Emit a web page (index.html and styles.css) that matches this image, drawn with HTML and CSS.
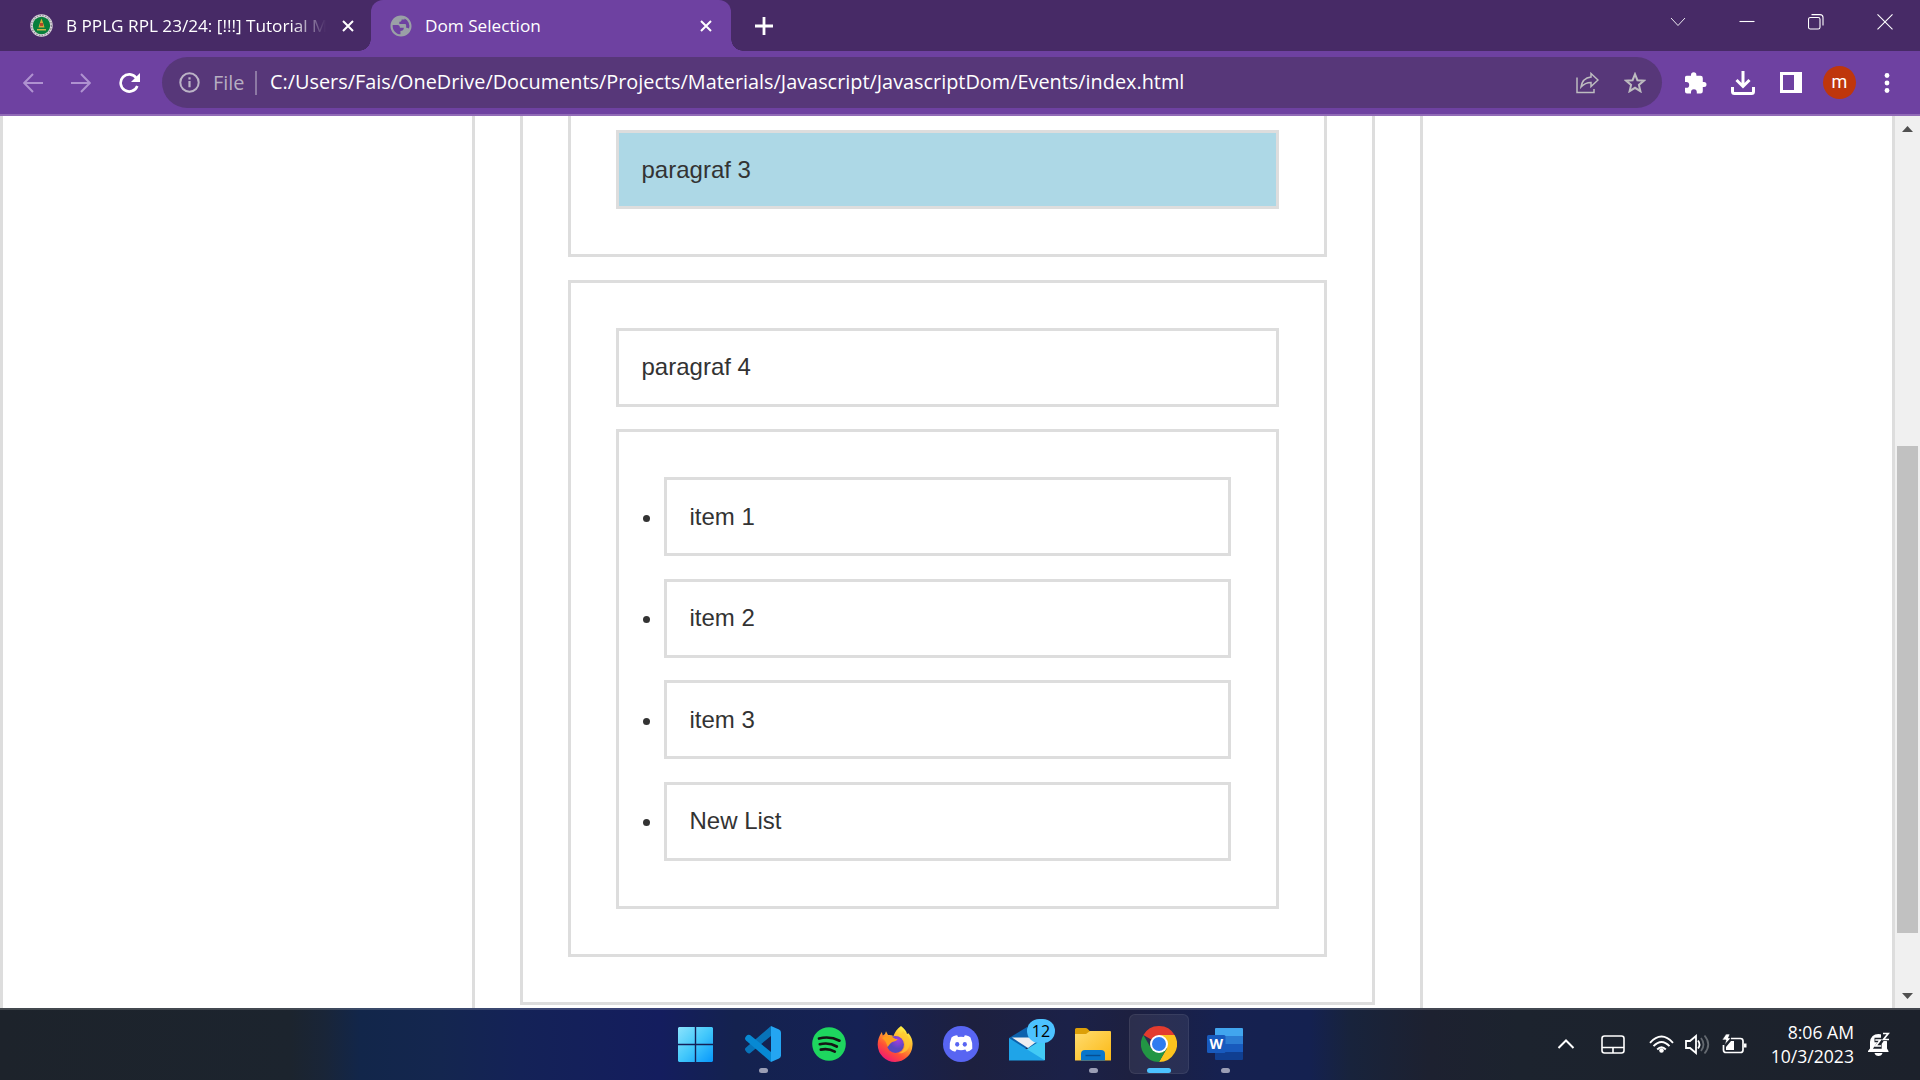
FILE: index.html
```html
<!DOCTYPE html>
<html lang="en">
<head>
<meta charset="utf-8">
<title>Dom Selection</title>
<link rel="stylesheet" href="styles.css">
</head>
<body>
<div class="screen">
  <header class="tabs">
    <div class="tab tab-idle">
      <svg class="favicon" width="23" height="23" viewBox="0 0 23 23"><circle cx="11.500" cy="11.500" r="11.200" fill="#d9d6dc"/><circle cx="11.500" cy="11.500" r="10" fill="none" stroke="#8d8790" stroke-dasharray="1.500 1.300" stroke-width="1.200"/><circle cx="11.500" cy="11.500" r="8.700" fill="#087f3b"/><path d="M11.500 4.500l1.500 4 1.500 5h-6l1.500-5z" fill="#d8a83c"/><path d="M10 9h3v3h-3z" fill="#b34a2a"/><path d="M7 15h9v1.500H7z" fill="#c8b84a"/></svg>
      <span class="tab-title fade">B PPLG RPL 23/24: [!!!] Tutorial M</span>
      <svg class="close" width="12" height="12" viewBox="0 0 12 12"><path d="M1 1l10 10M11 1L1 11" stroke="#fff" stroke-width="2"/></svg>
    </div>
    <div class="tab tab-active">
      <svg class="favicon" width="22" height="22" viewBox="0 0 24 24"><path fill="#9aa0a6" d="M12 0.500C5.600 0.500 0.500 5.600 0.500 12S5.600 23.500 12 23.500 23.500 18.400 23.500 12 18.400 0.500 12 0.500zM2.900 12c0-.4 0-.8.1-1.200l5.200 0c1.800 0 2.600 1.200 2.600 3.200h4.200c.3 2.200-1 3.400-3.600 3.400v3.700C6.700 21 2.900 16.900 2.900 12zm17.800 2.800c-.8-.9-1.800-1-3.100-1v-2.600c0-1-.7-1.500-1.700-1.500h-5.700V7.300c1.700 0 2.500-.8 2.500-2.500h3.200V3.700a9.200 9.200 0 0 1 4.800 11.100z"/></svg>
      <span class="tab-title">Dom Selection</span>
      <svg class="close" width="12" height="12" viewBox="0 0 12 12"><path d="M1 1l10 10M11 1L1 11" stroke="#fff" stroke-width="2"/></svg>
    </div>
    <svg class="new-tab" width="18" height="18" viewBox="0 0 18 18"><path d="M9 0v18M0 9h18" stroke="#fff" stroke-width="2.800"/></svg>
    <div class="window-controls">
      <svg width="16" height="16" viewBox="0 0 16 16"><path d="M1 4l7 7.500 7-7.500" stroke-width=".9"/></svg>
      <svg width="16" height="16" viewBox="0 0 16 16"><path d="M.5 7.500h15"/></svg>
      <svg width="16" height="16" viewBox="0 0 16 16"><rect x=".5" y="3.500" width="11.500" height="11.500" rx="1.800"/><path d="M3.500 .6h8.500a3 3 0 0 1 3 3v8"/></svg>
      <svg width="16" height="16" viewBox="0 0 16 16"><path d="M.5 .4l15 15M15.500 .4l-15 15"/></svg>
    </div>
  </header>

  <nav class="toolbar">
    <div class="nav-buttons">
      <svg width="20" height="20" viewBox="0 0 20 20"><path d="M20 10H1.500M10 1L1.200 10l8.800 9" fill="none" stroke="#af92d0" stroke-width="2"/></svg>
      <svg width="20" height="20" viewBox="0 0 20 20"><path d="M0 10h18.500M10 1l8.800 9-8.800 9" fill="none" stroke="#af92d0" stroke-width="2"/></svg>
      <svg width="21" height="20" viewBox="0 0 21 20"><path d="M17.300 5A8.600 8.600 0 1 0 18.300 13" fill="none" stroke="#fff" stroke-width="2.600"/><path d="M21 0v9h-9z" fill="#fff"/></svg>
    </div>
    <div class="address">
      <svg class="info" width="21" height="21" viewBox="0 0 21 21"><circle cx="10.500" cy="10.500" r="9.200" fill="none" stroke="#bbb3c6" stroke-width="2"/><path d="M10.500 5.200v2.300M10.500 9v6.300" stroke="#bbb3c6" stroke-width="2.200"/></svg>
      <span class="scheme">File</span>
      <span class="url">C:/Users/Fais/OneDrive/Documents/Projects/Materials/Javascript/JavascriptDom/Events/index.html</span>
      <svg class="share" width="23" height="22" viewBox="0 0 23 22" fill="none" stroke="#bdbcc0" stroke-width="1.500"><path d="M1 5.500V20.500h17V17"/><path d="M15 1.500l7 6.500-7 6.500v-4c-4 0-7 1.200-10 4.500 .7-5 3.700-9.200 10-10z"/></svg>
      <svg class="star" width="22" height="21" viewBox="0 0 22 21"><path d="M11 2.200l2.400 6 6.400.5-4.900 4.200 1.500 6.300-5.400-3.400-5.400 3.400 1.500-6.300L2.200 8.700l6.400-.5z" fill="none" stroke="#bdbcc0" stroke-width="2"/></svg>
    </div>
    <div class="actions">
      <svg width="22" height="22" viewBox="0 0 22 22"><path fill="#fff" d="M19 10h-1.200V6a2.200 2.200 0 0 0-2.200-2.200h-4.200V3a2.700 2.700 0 0 0-5.400 0v.8H2A2 2 0 0 0 0 6v4h1.300a2.900 2.900 0 0 1 0 5.800H0V19.500A2 2 0 0 0 2 21.500h4v-1.300a2.900 2.900 0 0 1 5.800 0v1.300h3.800a2.200 2.200 0 0 0 2.200-2.200V15H19a2.500 2.500 0 0 0 0-5z"/></svg>
      <svg width="24" height="24" viewBox="0 0 24 24" fill="none" stroke="#fff" stroke-width="3"><path d="M12 0v15M5.500 9l6.500 6.500L18.500 9"/><path d="M1.500 16v4.500q0 2 2 2h17q2 0 2-2V16"/></svg>
      <svg width="22" height="21" viewBox="0 0 22 21"><path fill="#fff" fill-rule="evenodd" d="M0 0h22v21H0zM3 3v15h11V3z"/></svg>
      <span class="avatar">m</span>
      <svg width="6" height="20" viewBox="0 0 6 20" fill="#fff"><circle cx="3" cy="2.500" r="2.400"/><circle cx="3" cy="10" r="2.400"/><circle cx="3" cy="17.500" r="2.400"/></svg>
    </div>
  </nav>

  <div class="viewport">
    <main class="page">
      <div class="container">
        <div class="wrap">
          <section class="part part-a">
            <p class="box highlight">paragraf 3</p>
          </section>
          <section class="part part-b">
            <p class="box">paragraf 4</p>
            <ul class="list">
              <li class="box">item 1</li>
              <li class="box">item 2</li>
              <li class="box">item 3</li>
              <li class="box">New List</li>
            </ul>
          </section>
        </div>
      </div>
    </main>
    <div class="scrollbar">
      <svg width="11" height="6" viewBox="0 0 11 6"><path d="M0 6l5.500-6L11 6z" fill="#505050"/></svg>
      <div class="thumb"></div>
      <svg width="11" height="6" viewBox="0 0 11 6"><path d="M0 0l5.500 6L11 0z" fill="#505050"/></svg>
    </div>
  </div>

  <footer class="taskbar">
    <div class="apps">
      <div class="app start"><svg width="35" height="35" viewBox="0 0 35 35"><defs><linearGradient id="win" x1="0" y1="0" x2="35" y2="35" gradientUnits="userSpaceOnUse"><stop offset="0" stop-color="#8be3fd"/><stop offset=".5" stop-color="#43c8fb"/><stop offset="1" stop-color="#0797fb"/></linearGradient></defs><path fill="url(#win)" d="M1 0h15.800v16.800H0V1zM18.200 0H34l1 1v15.800H18.200zM0 18.200h16.800V35H1l-1-1zM18.200 18.200H35V34l-1 1H18.200z"/></svg></div>
      <div class="app running"><svg width="36" height="36" viewBox="0 0 36 36"><path fill="#0873b9" d="M26 0v10L5 27.200Q3 28 1.500 26L.4 24.600Q-.6 22.800 1 21.500z"/><path fill="#0789d3" d="M5 9q-2-1-3.500.8L.4 11.200Q-.6 13 1 14.500L26 36V26z"/><path fill="#24a5f2" d="M26 0l8 3.500q2 1 2 3v23q0 2-2 3L26 36z"/></svg></div>
      <div class="app"><svg width="34" height="34" viewBox="0 0 34 34"><circle cx="17" cy="17" r="16.800" fill="#1ed65f"/><path d="M7 11.500q11-2.800 20.500 2.200M7.800 17.200q9.300-2.200 17 2.300M8.800 22.600q7.500-1.700 14 2" fill="none" stroke="#151515" stroke-width="2.700" stroke-linecap="round"/></svg></div>
      <div class="app"><svg width="36" height="36" viewBox="0 0 36 36"><defs><linearGradient id="fx" x1="28" y1="3" x2="8" y2="34" gradientUnits="userSpaceOnUse"><stop offset="0" stop-color="#fff044"/><stop offset=".35" stop-color="#ffad2c"/><stop offset=".68" stop-color="#ff5035"/><stop offset="1" stop-color="#ef1777"/></linearGradient><radialGradient id="fg" cx=".65" cy=".25"><stop offset="0" stop-color="#a23de2"/><stop offset="1" stop-color="#5747bd"/></radialGradient></defs><path fill="url(#fx)" d="M24 0c4 3 5.500 5.500 6 8l1.500-.8c3 4 4.500 7.500 4 12A17.500 17.500 0 0 1 18 36 17.500 17.500 0 0 1 .7 19C.5 14.500 2 10.500 4.800 6l1 3.500L8 8l1-2.700 2 3.800c2-.2 4 .1 5.500 1C17.500 6.500 20 3 24 0z"/><circle cx="18.500" cy="18.500" r="8.500" fill="url(#fg)"/><path d="M5 12c4-2 7-2.500 10-1.200L18.500 13h2.200c-1 2-3 2.500-5.500 3-2.500 1.400-3 3.600-4.700 5C9.800 17 8 14 5 12z" fill="#ff9e1e"/><path d="M18.500 9.500c6 .5 9.500 4 9.500 8.500s-2.500 8-7 9.200c7 .8 12-4 12-11 0-5-4.500-8-7-12-.5 4-4 5-7.500 5.300z" fill="#ffc832" opacity=".75"/></svg></div>
      <div class="app"><svg width="36" height="36" viewBox="0 0 36 36"><circle cx="18" cy="18" r="18" fill="#5865f2"/><path fill="#fff" d="M12.500 9.600l1.700-.3.800 1.600q3-.5 6 0l.8-1.600 1.700.3q2.500.6 4 1.800 2.300 5 1.800 11.300-2.300 2.300-5.500 3l-1.500-2.200q-4.300 1.300-8.600 0l-1.500 2.200q-3.200-.7-5.500-3Q6.200 16.400 8.500 11.400q1.500-1.200 4-1.800z"/><ellipse cx="14.200" cy="18.300" rx="2.100" ry="2.400" fill="#5865f2"/><ellipse cx="21.800" cy="18.300" rx="2.100" ry="2.400" fill="#5865f2"/></svg></div>
      <div class="app mail"><svg width="36" height="34" viewBox="0 0 36 34"><path d="M0 11L18 0l18 11v10H0z" fill="#0c62ad"/><path d="M3 10.500h30L19 21z" fill="#eeeef0"/><path d="M36 11v22H0z" fill="#42caf5"/><path d="M0 11l36 22.500H0z" fill="#1fa4e8"/></svg><span class="badge">12</span></div>
      <div class="app running"><svg width="36" height="33" viewBox="0 0 36 33"><defs><linearGradient id="fo" x1="0" y1="0" x2="1" y2="1"><stop offset="0" stop-color="#ffdc70"/><stop offset="1" stop-color="#fcb914"/></linearGradient></defs><path d="M0 1.500Q0 0 1.500 0h9q1.200 0 2 .8L15 3.200v5H0z" fill="#dc9f08"/><path d="M0 6h11l4-3h20q1 0 1 1v28.500H0z" fill="url(#fo)"/><path d="M6 32.500V26q0-4 4-4h16q4 0 4 4v6.500z" fill="#0876cb"/><path d="M10.500 27.500h15" stroke="#064e91" stroke-width="1.400"/></svg></div>
      <div class="app current"><svg width="36" height="36" viewBox="0 0 36 36"><path d="M18 18L2.410 9A18 18 0 0 1 33.590 9z" fill="#e33b2e"/><path d="M18 9h15.590A18 18 0 0 1 18 36l7.800-13.500z" fill="#fcc31e"/><path d="M2.410 9A18 18 0 0 0 18 36l7.800-13.500-7.800 4.500-7.800-4.500z" fill="#229544"/><circle cx="18" cy="18" r="9" fill="#fff"/><circle cx="18" cy="18" r="7" fill="#2f7cf0"/></svg></div>
      <div class="app running"><svg width="36" height="33" viewBox="0 0 36 33"><path fill="#41a5ee" d="M8 1q0-1 1-1h26q1 0 1 1v7.500H8z"/><path fill="#2b7cd3" d="M8 8h28v8H8z"/><path fill="#185abd" d="M8 16h28v8H8z"/><path fill="#103f91" d="M8 24h28v7q0 1-1 1H9q-1 0-1-1z"/><rect y="7" width="18.500" height="18" rx="1.500" fill="#185abd"/><text x="9.200" y="21" text-anchor="middle" class="word-letter">W</text></svg></div>
    </div>
    <div class="tray">
      <svg class="chevron" width="18" height="12" viewBox="0 0 18 12"><path d="M1.500 10L9 2.500l7.500 7.500" fill="none" stroke="#fff" stroke-width="2"/></svg>
      <svg class="touchpad" width="24" height="19" viewBox="0 0 24 19" fill="none" stroke="#fff" stroke-width="1.600"><rect x="1" y="1" width="22" height="17" rx="2.500"/><path d="M1 12.500h22M12 12.500V18"/></svg>
      <svg class="wifi" width="25" height="18" viewBox="0 0 25 18"><path d="M1 7.800q11.500-12.500 23 0M4.500 11.200q8-8.500 16 0M8.200 14.500q4.300-4.500 8.600 0" fill="none" stroke="#fff" stroke-width="1.900"/><circle cx="12.500" cy="15.500" r="2.300" fill="#fff"/></svg>
      <svg class="speaker" width="25" height="21" viewBox="0 0 25 21" fill="none" stroke-width="1.800"><path d="M1 7h4l6-5v17l-6-5H1z" stroke="#fff"/><path d="M13 6.500q3 4 0 8" stroke="#fff"/><path d="M16 4q5 6.500 0 13M19.500 1.500q7.500 9 0 18" stroke="#646970"/></svg>
      <svg class="battery" width="25" height="20" viewBox="0 0 25 20"><path d="M9 4.500h9.500q2.500 0 2.500 2.500v9q0 2.500-2.500 2.500H4q-2.500 0-2.500-2.500v-5" fill="none" stroke="#fff" stroke-width="1.700"/><path d="M4 13l5-6h3v9H4zM22 9.500h2.500v4H22z" fill="#fff"/><path d="M4 0h4L6.500 4H9L2.500 11 4 6H0z" fill="#fff" stroke="#1c232c" stroke-width=".7"/></svg>
      <div class="clock"><span>8:06 AM</span><span>10/3/2023</span></div>
      <svg class="bell" width="22" height="24" viewBox="0 0 22 24"><path fill="#fff" d="M2 16.500V10q1-8 8.500-8 7.500 0 8.500 8v6.500l1.500 2.500v1H0v-1zM6.500 21h8q-.8 3-4 3t-4-3z"/><path d="M13 0h9v9h-9z" fill="#1d222b"/><path d="M6.500 8h7l-4.300 6.500h4.500" fill="none" stroke="#1d222b" stroke-width="4.600"/><path d="M7.300 8h5l-4.600 6h5.500" fill="none" stroke="#fff" stroke-width="1.700"/><path d="M15 1.500h5.200l-4.700 6h5.500" fill="none" stroke="#fff" stroke-width="1.700"/></svg>
    </div>
  </footer>
</div>
</body>
</html>
```
FILE: styles.css
```css
* { box-sizing: border-box; }
body { margin: 0; overflow: hidden; font-family: "Open Sans", "Noto Sans", sans-serif; }
svg { display: block; flex: none; }
.screen { width: 1920px; height: 1080px; display: flex; flex-direction: column; overflow: hidden; }

/* Tab strip */
.tabs { height: 51px; flex: none; background: #472a66; display: flex; align-items: center; color: #fff; }
.tab { height: 51px; display: flex; align-items: center; flex: none; }
.tab-idle { width: 371px; padding: 0 17px 0 30px; }
.tab-active { width: 360px; padding: 0 19px 0 19px; background: #6e41a1; border-radius: 12px 12px 0 0; position: relative; }
.tab-active::before, .tab-active::after { content: ""; position: absolute; bottom: 0; width: 12px; height: 12px; }
.tab-active::before { left: -12px; background: radial-gradient(circle at 0 0, transparent 11.500px, #6e41a1 12px); }
.tab-active::after { right: -12px; background: radial-gradient(circle at 100% 0, transparent 11.500px, #6e41a1 12px); }
.tab-title { margin-left: 13px; font-size: 17.200px; line-height: 24px; white-space: nowrap; }
.fade { width: 262px; letter-spacing: -0.020px; -webkit-mask-image: linear-gradient(90deg, #000 225px, transparent 260px); mask-image: linear-gradient(90deg, #000 225px, transparent 260px); }
.close { margin-left: auto; }
.new-tab { margin-left: 23.500px; }
.window-controls { margin-left: auto; margin-right: 27px; display: flex; gap: 53px; padding-bottom: 8px; fill: none; stroke: #fff; stroke-width: 1.100px; }

/* Toolbar */
.toolbar { height: 65px; flex: none; background: #6e41a1; border-bottom: 2px solid #916bb7; display: flex; align-items: center; }
.nav-buttons { display: flex; gap: 28px; padding-left: 23px; width: 162px; }
.address { width: 1500px; height: 51px; border-radius: 26px; background: #573779; display: flex; align-items: center; padding: 0 16px 0 17px; color: #fff; font-size: 19.880px; white-space: nowrap; }
.scheme { color: #b6aec1; margin-left: 13px; width: 44px; height: 24px; line-height: 23px; border-right: 2px solid #8d79a4; }
.url { margin-left: 13px; line-height: 24px; padding-bottom: 1px; }
.share { margin-left: auto; }
.star { margin-left: 25px; }
.actions { display: flex; align-items: center; margin-left: 23px; }
.actions > :nth-child(2) { margin-left: 24px; }
.actions > :nth-child(3) { margin-left: 25px; }
.avatar { width: 33px; height: 33px; margin: 0 28px 0 21px; border-radius: 50%; background: #bf360c; color: #fff; font: 18px/32px Roboto, sans-serif; text-align: center; }

/* Page */
.viewport { height: 892px; flex: none; display: flex; background: #fff; overflow: hidden; }
.page { width: 1895px; border: solid #ddd; border-width: 0 3px; color: #333; font: 24px/28px "Liberation Sans", Arial, sans-serif; }
.container { width: 951px; height: 100%; margin: 0 auto; border: solid #ddd; border-width: 0 3px; padding: 0 45px; }
.wrap { height: 888.750px; border: 3px solid #ddd; border-top: 0; padding: 0 45px; }
.part { border: 3px solid #ddd; padding: 45px; }
.part-a { border-top: 0; padding-top: 14.250px; }
.part-b { margin-top: 22.500px; }
.box { margin: 0; border: 3px solid #ddd; padding: 22.500px; }
.highlight { background: #add8e6; }
.list { margin: 22.500px 0 0; border: 3px solid #ddd; padding: 45px; }
.list .box + .box { margin-top: 22.500px; }
.scrollbar { width: 25px; background: #f0f0f0; display: flex; flex-direction: column; align-items: flex-start; padding: 10px 0 9px 7px; }
.thumb { width: 21px; height: 424px; flex: 0 0 487px; margin: 314px 0 auto -5px; background: #c1c1c1; }

/* Taskbar */
.taskbar { height: 72px; flex: none; border-top: 2px solid rgba(255,255,255,.17); background: linear-gradient(90deg, #1d232b 0, #1c242e 290px, #192538 325px, #12264a 360px, #14264f 440px, #142257 520px, #141d5e 660px, #14224f 735px, #152154 860px, #1d203f 970px, #1b2148 1070px, #1d2040 1130px, #162150 1220px, #142150 1310px, #18233c 1350px, #1d2130 1430px, #1c232e 1520px, #1c212b 1920px) border-box; display: flex; color: #fff; }
.apps { display: flex; gap: 6px; padding: 4px 0 0 667px; }
.app { width: 60px; height: 60px; display: flex; align-items: center; justify-content: center; position: relative; border-radius: 6px; }
.start { padding-right: 3px; }
.running::after, .current::after { content: ""; position: absolute; left: 26px; bottom: 1px; width: 9px; height: 5px; border-radius: 3px; background: #9b9eb5; }
.current { background: rgba(255,255,255,.07); border: 1px solid rgba(255,255,255,.07); }
.current::after { left: 17px; bottom: 0; width: 24px; background: #4cc2ff; }
.badge { position: absolute; left: 30px; top: 5px; width: 28px; height: 24px; border-radius: 12px; background: #4cc2ff; color: #000; font-size: 16px; line-height: 24px; text-align: center; }
.word-letter { font: bold 14px "Open Sans", sans-serif; fill: #fff; }
.tray { margin-left: auto; display: flex; align-items: center; padding: 0 30px 2px 0; }
.touchpad { margin-left: 26px; }
.wifi { margin-left: 24px; }
.speaker { margin-left: 11px; }
.battery { margin-left: 12px; }
.clock { width: 107px; display: flex; flex-direction: column; align-items: flex-end; font-size: 17.600px; line-height: 24px; }
.bell { margin-left: 14px; }
```
